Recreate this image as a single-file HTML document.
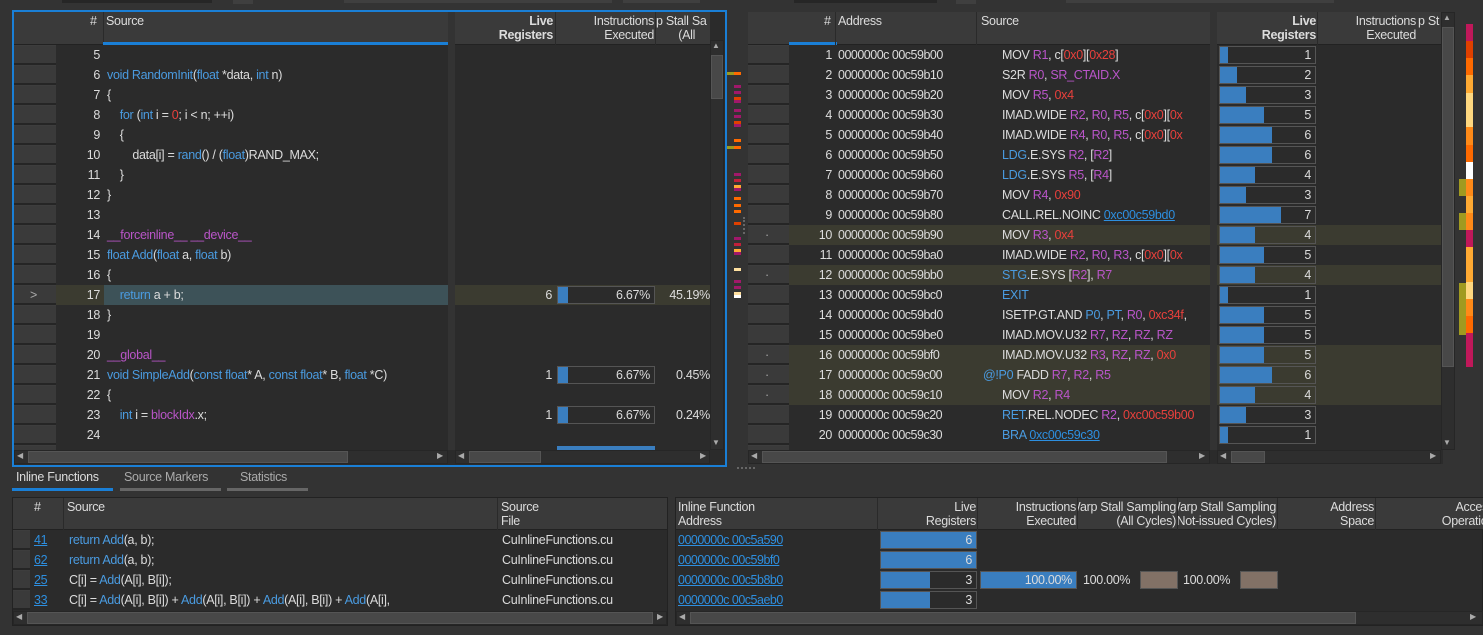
<!DOCTYPE html>
<html><head><meta charset="utf-8"><style>
*{box-sizing:border-box;margin:0;padding:0}
body{width:1483px;height:635px;background:#333;overflow:hidden;position:relative;font-family:"Liberation Sans","DejaVu Sans",sans-serif;font-size:12.5px;color:#dcdcdc;letter-spacing:-0.3px}
.a{position:absolute;white-space:nowrap}
.b{color:#4a9be0}.p{color:#b955c8}.r{color:#e8403c}.u{color:#2d8fe0;text-decoration:underline}
.hdr{background:#3a3a3a;border-bottom:1px solid #222}
.row{height:20px;line-height:20px}
.bar{position:absolute;height:18px;border:1px solid #555;background:#2b2b2b}
.bar i{position:absolute;left:0;top:0;bottom:0;background:#3a7ebf}
.bar span{position:absolute;right:4px;top:0;line-height:16px}
.sb{background:#2e2e2e;border:1px solid #262626}
.th{background:#484848;border:1px solid #555}
.tk{position:absolute;height:3px;width:7px}
.clipr{overflow:hidden}
.clipr>div{position:absolute;right:0;top:0;text-align:right;white-space:nowrap}
</style></head><body>
<div class="a" style="left:62px;top:0;width:150px;height:3px;background:#262626"></div>
<div class="a" style="left:233px;top:0;width:20px;height:4px;background:#3f3f3f"></div>
<div class="a" style="left:344px;top:0;width:268px;height:3px;background:#3f3f3f"></div>
<div class="a" style="left:623px;top:0;width:77px;height:3px;background:#3f3f3f"></div>
<div class="a" style="left:794px;top:0;width:143px;height:3px;background:#262626"></div>
<div class="a" style="left:956px;top:0;width:20px;height:4px;background:#3f3f3f"></div>
<div class="a" style="left:1066px;top:0;width:268px;height:3px;background:#3f3f3f"></div>

<!-- LEFT PANEL -->
<div class="a" style="left:12px;top:10px;width:715px;height:457px;border:2px solid #1a7fd6;background:#2b2b2b"></div>
<div class="a hdr" style="left:14px;top:12px;width:434px;height:33px"></div>
<div class="a" style="left:103px;top:12px;width:1px;height:33px;background:#2a2a2a"></div>
<div class="a" style="left:103px;top:42px;width:345px;height:3px;background:#1a7fd6"></div>
<div class="a" style="left:90px;top:14px">#</div>
<div class="a" style="left:106px;top:14px">Source</div>
<div class="a" style="left:448px;top:12px;width:7px;height:438px;background:#333"></div>
<div class="a hdr" style="left:455px;top:12px;width:255px;height:33px"></div>
<div class="a" style="left:455px;top:14px;width:98px;text-align:right;font-weight:bold;line-height:14px">Live<br>Registers</div>
<div class="a" style="left:555px;top:12px;width:1px;height:33px;background:#2a2a2a"></div>
<div class="a" style="left:556px;top:14px;width:98px;text-align:right;line-height:14px">Instructions<br>Executed</div>
<div class="a" style="left:655px;top:12px;width:1px;height:33px;background:#2a2a2a"></div>
<div class="a" style="left:656px;top:14px;width:54px;overflow:hidden;line-height:14px"><span style="display:inline-block;text-align:left">p Stall Sa<br>&nbsp;&nbsp;&nbsp;&nbsp;&nbsp;&nbsp;&nbsp;(All</span></div>
<div class="a" style="left:14px;top:45px;width:42px;height:405px;background:repeating-linear-gradient(#3d3d3d 0 1px,#3a3a3a 1px 18px,#252525 18px 20px)"></div>
<div class="a" style="left:56px;top:285px;width:48px;height:20px;background:#3b3b30"></div>
<div class="a" style="left:104px;top:285px;width:344px;height:20px;background:#3d5258"></div>
<div class="a" style="left:455px;top:285px;width:255px;height:20px;background:#3b3b30"></div>
<div class="a row" style="left:30px;top:285px;color:#aaa">&gt;</div>
<div class="a" style="left:56px;top:45px;width:44px;text-align:right;line-height:20px">5<br>6<br>7<br>8<br>9<br>10<br>11<br>12<br>13<br>14<br>15<br>16<br>17<br>18<br>19<br>20<br>21<br>22<br>23<br>24</div>
<div class="a" style="left:107px;top:45px;line-height:20px">
&nbsp;<br>
<span class="b">void RandomInit</span>(<span class="b">float</span> *data, <span class="b">int</span> n)<br>
{<br>
&nbsp;&nbsp;&nbsp;&nbsp;<span class="b">for</span> (<span class="b">int</span> i = <span class="r">0</span>; i &lt; n; ++i)<br>
&nbsp;&nbsp;&nbsp;&nbsp;{<br>
&nbsp;&nbsp;&nbsp;&nbsp;&nbsp;&nbsp;&nbsp;&nbsp;data[i] = <span class="b">rand</span>() / (<span class="b">float</span>)RAND_MAX;<br>
&nbsp;&nbsp;&nbsp;&nbsp;}<br>
}<br>
&nbsp;<br>
<span class="p">__forceinline__ __device__</span><br>
<span class="b">float Add</span>(<span class="b">float</span> a, <span class="b">float</span> b)<br>
{<br>
&nbsp;&nbsp;&nbsp;&nbsp;<span class="b">return</span> a + b;<br>
}<br>
&nbsp;<br>
<span class="p">__global__</span><br>
<span class="b">void SimpleAdd</span>(<span class="b">const float</span>* A, <span class="b">const float</span>* B, <span class="b">float</span> *C)<br>
{<br>
&nbsp;&nbsp;&nbsp;&nbsp;<span class="b">int</span> i = <span class="p">blockIdx</span>.x;<br>
&nbsp;</div>
<div class="a row" style="left:500px;top:285px;width:52px;text-align:right">6</div>
<div class="bar" style="left:557px;top:286px;width:98px"><i style="width:10px"></i><span>6.67%</span></div>
<div class="a row" style="left:656px;top:285px;width:54px;text-align:right">45.19%</div>
<div class="a row" style="left:500px;top:365px;width:52px;text-align:right">1</div>
<div class="bar" style="left:557px;top:366px;width:98px"><i style="width:10px"></i><span>6.67%</span></div>
<div class="a row" style="left:656px;top:365px;width:54px;text-align:right">0.45%</div>
<div class="a row" style="left:500px;top:405px;width:52px;text-align:right">1</div>
<div class="bar" style="left:557px;top:406px;width:98px"><i style="width:10px"></i><span>6.67%</span></div>
<div class="a row" style="left:656px;top:405px;width:54px;text-align:right">0.24%</div>
<div class="a" style="left:557px;top:446px;width:98px;height:4px;background:#3a7ebf"></div>
<div class="a sb" style="left:710px;top:40px;width:14px;height:410px"></div>
<div class="a th" style="left:711px;top:55px;width:12px;height:44px"></div>
<div class="a" style="left:712px;top:41px;color:#aaa;font-size:8px">▲</div>
<div class="a" style="left:712px;top:438px;color:#aaa;font-size:8px">▼</div>
<div class="a sb" style="left:14px;top:450px;width:434px;height:14px"></div>
<div class="a th" style="left:28px;top:451px;width:320px;height:12px"></div>
<div class="a sb" style="left:455px;top:450px;width:255px;height:14px"></div>
<div class="a th" style="left:469px;top:451px;width:72px;height:12px"></div>
<div class="a" style="left:17px;top:451px;color:#aaa;font-size:8px">◀</div>
<div class="a" style="left:437px;top:451px;color:#aaa;font-size:8px">▶</div>
<div class="a" style="left:458px;top:451px;color:#aaa;font-size:8px">◀</div>
<div class="a" style="left:700px;top:451px;color:#aaa;font-size:8px">▶</div>

<div class="tk" style="left:727px;top:72px;background:#9a9a20"></div><div class="tk" style="left:734px;top:72px;background:#ff6a00"></div>
<div class="tk" style="left:734px;top:85px;background:#a0186a"></div>
<div class="tk" style="left:734px;top:91px;background:#a0186a"></div>
<div class="tk" style="left:734px;top:97px;background:#e04000"></div>
<div class="tk" style="left:734px;top:100px;background:#a0186a"></div>
<div class="tk" style="left:734px;top:109px;background:#a0186a"></div>
<div class="tk" style="left:734px;top:115px;background:#a0186a"></div>
<div class="tk" style="left:734px;top:121px;background:#e04000"></div>
<div class="tk" style="left:734px;top:124px;background:#a0186a"></div>
<div class="tk" style="left:734px;top:139px;background:#ff6a00"></div>
<div class="tk" style="left:727px;top:146px;background:#9a9a20"></div><div class="tk" style="left:734px;top:146px;background:#ff6a00"></div>
<div class="tk" style="left:734px;top:173px;background:#a0186a"></div>
<div class="tk" style="left:734px;top:179px;background:#c0203a"></div>
<div class="tk" style="left:734px;top:185px;background:#ffaa33"></div>
<div class="tk" style="left:734px;top:188px;background:#a0186a"></div>
<div class="tk" style="left:734px;top:197px;background:#ff6a00"></div>
<div class="tk" style="left:734px;top:204px;background:#ff6a00"></div>
<div class="tk" style="left:734px;top:210px;background:#ff6a00"></div>
<div class="tk" style="left:734px;top:222px;background:#e04000"></div>
<div class="tk" style="left:734px;top:237px;background:#a0186a"></div>
<div class="tk" style="left:734px;top:243px;background:#c0203a"></div>
<div class="tk" style="left:734px;top:249px;background:#ffaa33"></div>
<div class="tk" style="left:734px;top:252px;background:#a0186a"></div>
<div class="tk" style="left:734px;top:268px;background:#ffe0a0"></div>
<div class="tk" style="left:734px;top:280px;background:#a0186a"></div>
<div class="tk" style="left:734px;top:286px;background:#a0186a"></div>
<div class="tk" style="left:734px;top:292px;background:#ffe0a0"></div>
<div class="tk" style="left:734px;top:295px;background:#fff"></div>
<div class="a" style="left:743px;top:217px;width:2px;height:17px;border-left:2px dotted #666"></div>

<!-- RIGHT PANEL -->
<div class="a" style="left:748px;top:12px;width:695px;height:452px;background:#2b2b2b"></div>
<div class="a hdr" style="left:748px;top:12px;width:462px;height:33px"></div>
<div class="a" style="left:789px;top:42px;width:48px;height:3px;background:#1a7fd6"></div>
<div class="a" style="left:835px;top:12px;width:1px;height:33px;background:#2a2a2a"></div>
<div class="a" style="left:976px;top:12px;width:1px;height:33px;background:#2a2a2a"></div>
<div class="a" style="left:824px;top:14px">#</div>
<div class="a" style="left:838px;top:14px">Address</div>
<div class="a" style="left:981px;top:14px">Source</div>
<div class="a" style="left:1210px;top:12px;width:7px;height:438px;background:#333"></div>
<div class="a hdr" style="left:1217px;top:12px;width:224px;height:33px"></div>
<div class="a" style="left:1217px;top:14px;width:99px;text-align:right;font-weight:bold;line-height:14px">Live<br>Registers</div>
<div class="a" style="left:1317px;top:12px;width:1px;height:33px;background:#2a2a2a"></div>
<div class="a" style="left:1318px;top:14px;width:98px;text-align:right;line-height:14px">Instructions<br>Executed</div>
<div class="a" style="left:1418px;top:14px;width:22px;overflow:hidden">p St</div>
<div class="a" style="left:748px;top:45px;width:41px;height:405px;background:repeating-linear-gradient(#3d3d3d 0 1px,#3a3a3a 1px 18px,#252525 18px 20px)"></div>
<div class="a" style="left:789px;top:225px;width:421px;height:20px;background:#3b3b30"></div>
<div class="a" style="left:1217px;top:225px;width:224px;height:20px;background:#3b3b30"></div>
<div class="a" style="left:789px;top:265px;width:421px;height:20px;background:#3b3b30"></div>
<div class="a" style="left:1217px;top:265px;width:224px;height:20px;background:#3b3b30"></div>
<div class="a" style="left:789px;top:345px;width:421px;height:60px;background:#3b3b30"></div>
<div class="a" style="left:1217px;top:345px;width:224px;height:60px;background:#3b3b30"></div>
<div class="a" style="left:765px;top:225px;line-height:20px;color:#aaa">·<br><br>·<br><br><br><br>·<br>·<br>·</div>
<div class="a" style="left:790px;top:45px;width:42px;text-align:right;line-height:20px">1<br>2<br>3<br>4<br>5<br>6<br>7<br>8<br>9<br>10<br>11<br>12<br>13<br>14<br>15<br>16<br>17<br>18<br>19<br>20</div>
<div class="a" style="left:838px;top:45px;line-height:20px;letter-spacing:-0.5px">0000000c 00c59b00<br>0000000c 00c59b10<br>0000000c 00c59b20<br>0000000c 00c59b30<br>0000000c 00c59b40<br>0000000c 00c59b50<br>0000000c 00c59b60<br>0000000c 00c59b70<br>0000000c 00c59b80<br>0000000c 00c59b90<br>0000000c 00c59ba0<br>0000000c 00c59bb0<br>0000000c 00c59bc0<br>0000000c 00c59bd0<br>0000000c 00c59be0<br>0000000c 00c59bf0<br>0000000c 00c59c00<br>0000000c 00c59c10<br>0000000c 00c59c20<br>0000000c 00c59c30</div>
<div class="a" style="left:980px;top:45px;width:227px;padding-left:22px;overflow:hidden;line-height:20px">
MOV <span class="p">R1</span>, c[<span class="r">0x0</span>][<span class="r">0x28</span>]<br>
S2R <span class="p">R0</span>, <span class="p">SR_CTAID.X</span><br>
MOV <span class="p">R5</span>, <span class="r">0x4</span><br>
IMAD.WIDE <span class="p">R2</span>, <span class="p">R0</span>, <span class="p">R5</span>, c[<span class="r">0x0</span>][<span class="r">0x</span><br>
IMAD.WIDE <span class="p">R4</span>, <span class="p">R0</span>, <span class="p">R5</span>, c[<span class="r">0x0</span>][<span class="r">0x</span><br>
<span class="b">LDG</span>.E.SYS <span class="p">R2</span>, [<span class="p">R2</span>]<br>
<span class="b">LDG</span>.E.SYS <span class="p">R5</span>, [<span class="p">R4</span>]<br>
MOV <span class="p">R4</span>, <span class="r">0x90</span><br>
CALL.REL.NOINC <span class="u">0xc00c59bd0</span><br>
MOV <span class="p">R3</span>, <span class="r">0x4</span><br>
IMAD.WIDE <span class="p">R2</span>, <span class="p">R0</span>, <span class="p">R3</span>, c[<span class="r">0x0</span>][<span class="r">0x</span><br>
<span class="b">STG</span>.E.SYS [<span class="p">R2</span>], <span class="p">R7</span><br>
<span class="b">EXIT</span><br>
ISETP.GT.AND <span class="b">P0</span>, <span class="b">PT</span>, <span class="p">R0</span>, <span class="r">0xc34f</span>,<br>
IMAD.MOV.U32 <span class="p">R7</span>, <span class="p">RZ</span>, <span class="p">RZ</span>, <span class="p">RZ</span><br>
IMAD.MOV.U32 <span class="p">R3</span>, <span class="p">RZ</span>, <span class="p">RZ</span>, <span class="r">0x0</span><br>
<span style="margin-left:-19px"><span class="b">@!P0</span> FADD <span class="p">R7</span>, <span class="p">R2</span>, <span class="p">R5</span></span><br>
MOV <span class="p">R2</span>, <span class="p">R4</span><br>
<span class="b">RET</span>.REL.NODEC <span class="p">R2</span>, <span class="r">0xc00c59b00</span><br>
<span class="b">BRA</span> <span class="u">0xc00c59c30</span></div>
<div class="bar" style="left:1219px;top:46px;width:97px"><i style="width:8px"></i><span>1</span></div>
<div class="bar" style="left:1219px;top:66px;width:97px"><i style="width:17px"></i><span>2</span></div>
<div class="bar" style="left:1219px;top:86px;width:97px"><i style="width:26px"></i><span>3</span></div>
<div class="bar" style="left:1219px;top:106px;width:97px"><i style="width:44px"></i><span>5</span></div>
<div class="bar" style="left:1219px;top:126px;width:97px"><i style="width:52px"></i><span>6</span></div>
<div class="bar" style="left:1219px;top:146px;width:97px"><i style="width:52px"></i><span>6</span></div>
<div class="bar" style="left:1219px;top:166px;width:97px"><i style="width:35px"></i><span>4</span></div>
<div class="bar" style="left:1219px;top:186px;width:97px"><i style="width:26px"></i><span>3</span></div>
<div class="bar" style="left:1219px;top:206px;width:97px"><i style="width:61px"></i><span>7</span></div>
<div class="bar" style="left:1219px;top:226px;width:97px;background:none"><i style="width:35px"></i><span>4</span></div>
<div class="bar" style="left:1219px;top:246px;width:97px"><i style="width:44px"></i><span>5</span></div>
<div class="bar" style="left:1219px;top:266px;width:97px;background:none"><i style="width:35px"></i><span>4</span></div>
<div class="bar" style="left:1219px;top:286px;width:97px"><i style="width:8px"></i><span>1</span></div>
<div class="bar" style="left:1219px;top:306px;width:97px"><i style="width:44px"></i><span>5</span></div>
<div class="bar" style="left:1219px;top:326px;width:97px"><i style="width:44px"></i><span>5</span></div>
<div class="bar" style="left:1219px;top:346px;width:97px;background:none"><i style="width:44px"></i><span>5</span></div>
<div class="bar" style="left:1219px;top:366px;width:97px;background:none"><i style="width:52px"></i><span>6</span></div>
<div class="bar" style="left:1219px;top:386px;width:97px;background:none"><i style="width:35px"></i><span>4</span></div>
<div class="bar" style="left:1219px;top:406px;width:97px"><i style="width:26px"></i><span>3</span></div>
<div class="bar" style="left:1219px;top:426px;width:97px"><i style="width:8px"></i><span>1</span></div>
<div class="a sb" style="left:1441px;top:12px;width:14px;height:438px"></div>
<div class="a th" style="left:1442px;top:27px;width:12px;height:340px"></div>
<div class="a" style="left:1443px;top:13px;color:#aaa;font-size:8px">▲</div>
<div class="a" style="left:1443px;top:438px;color:#aaa;font-size:8px">▼</div>
<div class="a sb" style="left:748px;top:450px;width:462px;height:14px"></div>
<div class="a th" style="left:762px;top:451px;width:405px;height:12px"></div>
<div class="a sb" style="left:1217px;top:450px;width:224px;height:14px"></div>
<div class="a th" style="left:1231px;top:451px;width:34px;height:12px"></div>
<div class="a" style="left:751px;top:451px;color:#aaa;font-size:8px">◀</div>
<div class="a" style="left:1199px;top:451px;color:#aaa;font-size:8px">▶</div>
<div class="a" style="left:1220px;top:451px;color:#aaa;font-size:8px">◀</div>
<div class="a" style="left:1430px;top:451px;color:#aaa;font-size:8px">▶</div>
<div class="a" style="left:737px;top:467px;width:18px;height:2px;border-top:2px dotted #666"></div>
<div class="a" style="left:1466px;top:24px;width:7px">
<div style="height:17px;background:#c0185a"></div><div style="height:17px;background:#e04000"></div><div style="height:17px;background:#ff6a00"></div><div style="height:18px;background:#ffaa33"></div><div style="height:34px;background:#ffd880"></div><div style="height:18px;background:#ff8a18"></div><div style="height:17px;background:#ff6a00"></div><div style="height:17px;background:#fff"></div><div style="height:17px;background:#ff8a18"></div><div style="height:17px;background:#ffaa33"></div><div style="height:17px;background:#ff8a18"></div><div style="height:17px;background:#c0185a"></div><div style="height:35px;background:#ffaa33"></div><div style="height:17px;background:#ffd880"></div><div style="height:17px;background:#ff8a18"></div><div style="height:17px;background:#ff6a00"></div><div style="height:34px;background:#c0185a"></div></div>
<div class="a" style="left:1459px;top:179px;width:7px;height:17px;background:#a09a20"></div>
<div class="a" style="left:1459px;top:213px;width:7px;height:17px;background:#a09a20"></div>
<div class="a" style="left:1459px;top:283px;width:7px;height:52px;background:#a09a20"></div>

<!-- TABS -->
<div class="a" style="left:16px;top:470px">Inline Functions</div>
<div class="a" style="left:12px;top:488px;width:101px;height:3px;background:#1a7fd6"></div>
<div class="a" style="left:124px;top:470px;color:#aaa">Source Markers</div>
<div class="a" style="left:120px;top:488px;width:101px;height:3px;background:#666"></div>
<div class="a" style="left:240px;top:470px;color:#aaa">Statistics</div>
<div class="a" style="left:227px;top:488px;width:81px;height:3px;background:#666"></div>

<div class="a" style="left:12px;top:497px;width:656px;height:129px;background:#2b2b2b;border:1px solid #222"></div>
<div class="a hdr" style="left:13px;top:498px;width:654px;height:32px"></div>
<div class="a" style="left:63px;top:498px;width:1px;height:32px;background:#2a2a2a"></div>
<div class="a" style="left:497px;top:498px;width:1px;height:32px;background:#2a2a2a"></div>
<div class="a" style="left:34px;top:500px">#</div>
<div class="a" style="left:67px;top:500px">Source</div>
<div class="a" style="left:501px;top:500px;line-height:14px">Source<br>File</div>
<div class="a" style="left:13px;top:530px;width:17px;height:80px;background:repeating-linear-gradient(#3d3d3d 0 1px,#3a3a3a 1px 18px,#252525 18px 20px)"></div>
<div class="a" style="left:34px;top:530px;line-height:20px"><span class="u">41</span><br><span class="u">62</span><br><span class="u">25</span><br><span class="u">33</span></div>
<div class="a" style="left:69px;top:530px;line-height:20px;width:426px;overflow:hidden">
<span class="b">return Add</span>(a, b);<br>
<span class="b">return Add</span>(a, b);<br>
C[i] = <span class="b">Add</span>(A[i], B[i]);<br>
C[i] = <span class="b">Add</span>(A[i], B[i]) + <span class="b">Add</span>(A[i], B[i]) + <span class="b">Add</span>(A[i], B[i]) + <span class="b">Add</span>(A[i],</div>
<div class="a" style="left:502px;top:530px;line-height:20px">CuInlineFunctions.cu<br>CuInlineFunctions.cu<br>CuInlineFunctions.cu<br>CuInlineFunctions.cu</div>
<div class="a sb" style="left:13px;top:611px;width:654px;height:14px"></div>
<div class="a th" style="left:27px;top:612px;width:626px;height:12px"></div>
<div class="a" style="left:16px;top:612px;color:#aaa;font-size:8px">◀</div>
<div class="a" style="left:657px;top:612px;color:#aaa;font-size:8px">▶</div>
<div class="a" style="left:668px;top:497px;width:7px;height:129px;background:#333"></div>

<div class="a" style="left:675px;top:497px;width:808px;height:129px;background:#2b2b2b;border:1px solid #222"></div>
<div class="a hdr" style="left:676px;top:498px;width:807px;height:32px"></div>
<div class="a" style="left:877px;top:498px;width:1px;height:32px;background:#2a2a2a"></div>
<div class="a" style="left:977px;top:498px;width:1px;height:32px;background:#2a2a2a"></div>
<div class="a" style="left:1077px;top:498px;width:1px;height:32px;background:#2a2a2a"></div>
<div class="a" style="left:1177px;top:498px;width:1px;height:32px;background:#2a2a2a"></div>
<div class="a" style="left:1277px;top:498px;width:1px;height:32px;background:#2a2a2a"></div>
<div class="a" style="left:1375px;top:498px;width:1px;height:32px;background:#2a2a2a"></div>
<div class="a" style="left:678px;top:500px;line-height:14px">Inline Function<br>Address</div>
<div class="a" style="left:877px;top:500px;width:99px;text-align:right;line-height:14px">Live<br>Registers</div>
<div class="a" style="left:977px;top:500px;width:99px;text-align:right;line-height:14px">Instructions<br>Executed</div>
<div class="a clipr" style="left:1078px;top:500px;width:98px;height:28px;line-height:14px"><div>Warp Stall Sampling<br>(All Cycles)</div></div>
<div class="a clipr" style="left:1178px;top:500px;width:98px;height:28px;line-height:14px"><div>Warp Stall Sampling<br>(Not-issued Cycles)</div></div>
<div class="a" style="left:1278px;top:500px;width:96px;text-align:right;line-height:14px">Address<br>Space</div>
<div class="a" style="left:1376px;top:500px;width:107px;height:28px;overflow:hidden;line-height:14px"><div style="width:118px;text-align:right">Access<br>Operation</div></div>
<div class="a" style="left:678px;top:530px;line-height:20px;letter-spacing:-0.5px"><span class="u">0000000c 00c5a590</span><br><span class="u">0000000c 00c59bf0</span><br><span class="u">0000000c 00c5b8b0</span><br><span class="u">0000000c 00c5aeb0</span></div>
<div class="bar" style="left:880px;top:531px;width:97px"><i style="width:95px"></i><span>6</span></div>
<div class="bar" style="left:880px;top:551px;width:97px"><i style="width:95px"></i><span>6</span></div>
<div class="bar" style="left:880px;top:571px;width:97px"><i style="width:49px"></i><span>3</span></div>
<div class="bar" style="left:880px;top:591px;width:97px"><i style="width:49px"></i><span>3</span></div>
<div class="bar" style="left:980px;top:571px;width:97px"><i style="width:95px"></i><span>100.00%</span></div>
<div class="a row" style="left:1083px;top:570px">100.00%</div>
<div class="a" style="left:1140px;top:571px;width:38px;height:18px;background:#827166;border:1px solid #555"></div>
<div class="a row" style="left:1183px;top:570px">100.00%</div>
<div class="a" style="left:1240px;top:571px;width:38px;height:18px;background:#827166;border:1px solid #555"></div>
<div class="a sb" style="left:676px;top:611px;width:807px;height:14px"></div>
<div class="a th" style="left:690px;top:612px;width:666px;height:12px"></div>
<div class="a" style="left:679px;top:612px;color:#aaa;font-size:8px">◀</div>
<div class="a" style="left:1470px;top:612px;color:#aaa;font-size:8px">▶</div>
</body></html>
